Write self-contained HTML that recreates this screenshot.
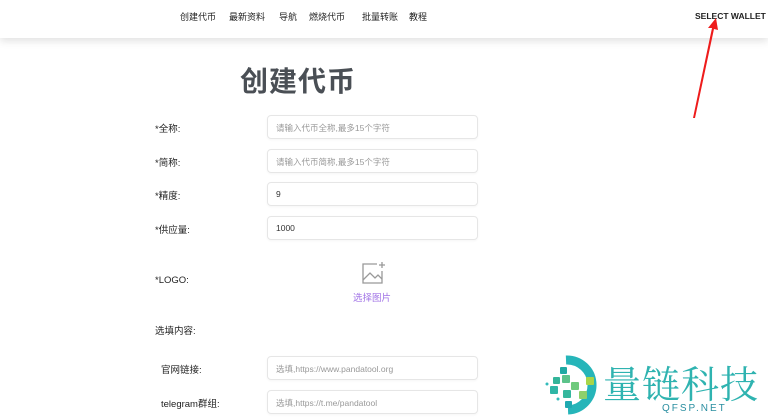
<!DOCTYPE html>
<html><head><meta charset="utf-8"><style>
*{margin:0;padding:0;box-sizing:border-box}
body{width:768px;height:420px;overflow:hidden;background:#fff;position:relative;font-family:"Liberation Sans","Noto Sans CJK SC",sans-serif;color:#222}
.hdr{position:absolute;left:0;top:0;width:768px;height:38px;background:#fff;box-shadow:0 3px 8px rgba(0,0,0,.12)}
.nav{position:absolute;top:10px;font-size:9px;color:#222;white-space:nowrap}
.sw{position:absolute;left:695px;top:11px;font-size:8.5px;font-weight:bold;color:#222;white-space:nowrap}
.title{position:absolute;left:240px;top:60px;font-size:28px;font-weight:bold;color:#4a4f55;letter-spacing:1px;font-family:"WenQuanYi Zen Hei","Noto Sans CJK SC",sans-serif}
.lbl{position:absolute;font-size:9.5px;color:#222;white-space:nowrap}
.inp{position:absolute;left:267px;width:211px;height:24px;border:1px solid #e6e6e6;border-radius:4px;font-size:8.5px;color:#999;padding:6px 8px;white-space:nowrap;box-shadow:0 1px 2px rgba(0,0,0,.04)}
.inp.v{color:#333}
</style></head><body>
<div class="hdr"></div>
<div class="nav" style="left:180px">创建代币</div>
<div class="nav" style="left:229px">最新资料</div>
<div class="nav" style="left:279px">导航</div>
<div class="nav" style="left:309px">燃烧代币</div>
<div class="nav" style="left:362px">批量转账</div>
<div class="nav" style="left:409px">教程</div>
<div class="sw">SELECT WALLET</div>
<svg style="position:absolute;left:0;top:0" width="768" height="420"><path d="M693 118 L712 28 L708 28 L716 18 L718 30 L714 29 L695 118 Z" fill="#ee1c1c"/></svg>
<div class="title">创建代币</div>
<div class="lbl" style="left:155px;top:121px">*全称:</div>
<div class="inp" style="top:115px">请输入代币全称,最多15个字符</div>
<div class="lbl" style="left:155px;top:155px">*简称:</div>
<div class="inp" style="top:149px">请输入代币简称,最多15个字符</div>
<div class="lbl" style="left:155px;top:188px">*精度:</div>
<div class="inp v" style="top:182px">9</div>
<div class="lbl" style="left:155px;top:222px">*供应量:</div>
<div class="inp v" style="top:216px">1000</div>
<div class="lbl" style="left:155px;top:275px">*LOGO:</div>
<svg style="position:absolute;left:360px;top:260px" width="28" height="26" viewBox="0 0 28 26"><path d="M17 4 H3 V23 H22 V11" fill="none" stroke="#999" stroke-width="1.3"/><path d="M3 20 L10 13 L15 18 L18 15 L22 19" fill="none" stroke="#999" stroke-width="1.3"/><path d="M22 2 V8 M19 5 H25" stroke="#999" stroke-width="1.3"/></svg>
<div class="lbl" style="left:353px;top:290px;color:#a173e6">选择图片</div>
<div class="lbl" style="left:155px;top:323px">选填内容:</div>
<div class="lbl" style="left:161px;top:362px">官网链接:</div>
<div class="inp" style="top:356px">选填,https://www.pandatool.org</div>
<div class="lbl" style="left:161px;top:396px">telegram群组:</div>
<div class="inp" style="top:390px">选填,https://t.me/pandatool</div>
<svg style="position:absolute;left:540px;top:355px" width="70" height="62">
<path d="M26 5 A25 25 0 1 1 28 55" fill="none" stroke="#26b5b9" stroke-width="9"/>
<rect x="20" y="12" width="7" height="7" rx="1" fill="#1fa9a3"/>
<rect x="13" y="22" width="7" height="7" rx="1" fill="#33b59a"/>
<rect x="22" y="20" width="8" height="8" rx="1" fill="#5cc38a"/>
<rect x="10" y="31" width="8" height="8" rx="1" fill="#2fb6a6"/>
<rect x="23" y="35" width="8" height="8" rx="1" fill="#35b79d"/>
<rect x="31" y="27" width="8" height="8" rx="1" fill="#6fca7d"/>
<rect x="39" y="36" width="8" height="8" rx="1" fill="#8fd06a"/>
<rect x="46" y="22" width="8" height="8" rx="1" fill="#a8d548"/>
<rect x="25" y="46" width="7" height="7" rx="1" fill="#1fa9b0"/>
<circle cx="7" cy="29" r="1.5" fill="#3bb"/><circle cx="18" cy="44" r="1.5" fill="#3bb"/>
</svg>
<div style="position:absolute;left:603px;top:354px;font-size:38px;color:#2fb3b0;font-family:'Noto Serif CJK SC',serif;letter-spacing:1px;white-space:nowrap">量链科技</div>
<div style="position:absolute;left:662px;top:403px;font-size:10px;color:#2a8ea0;letter-spacing:2px">QFSP.NET</div>
</body></html>
